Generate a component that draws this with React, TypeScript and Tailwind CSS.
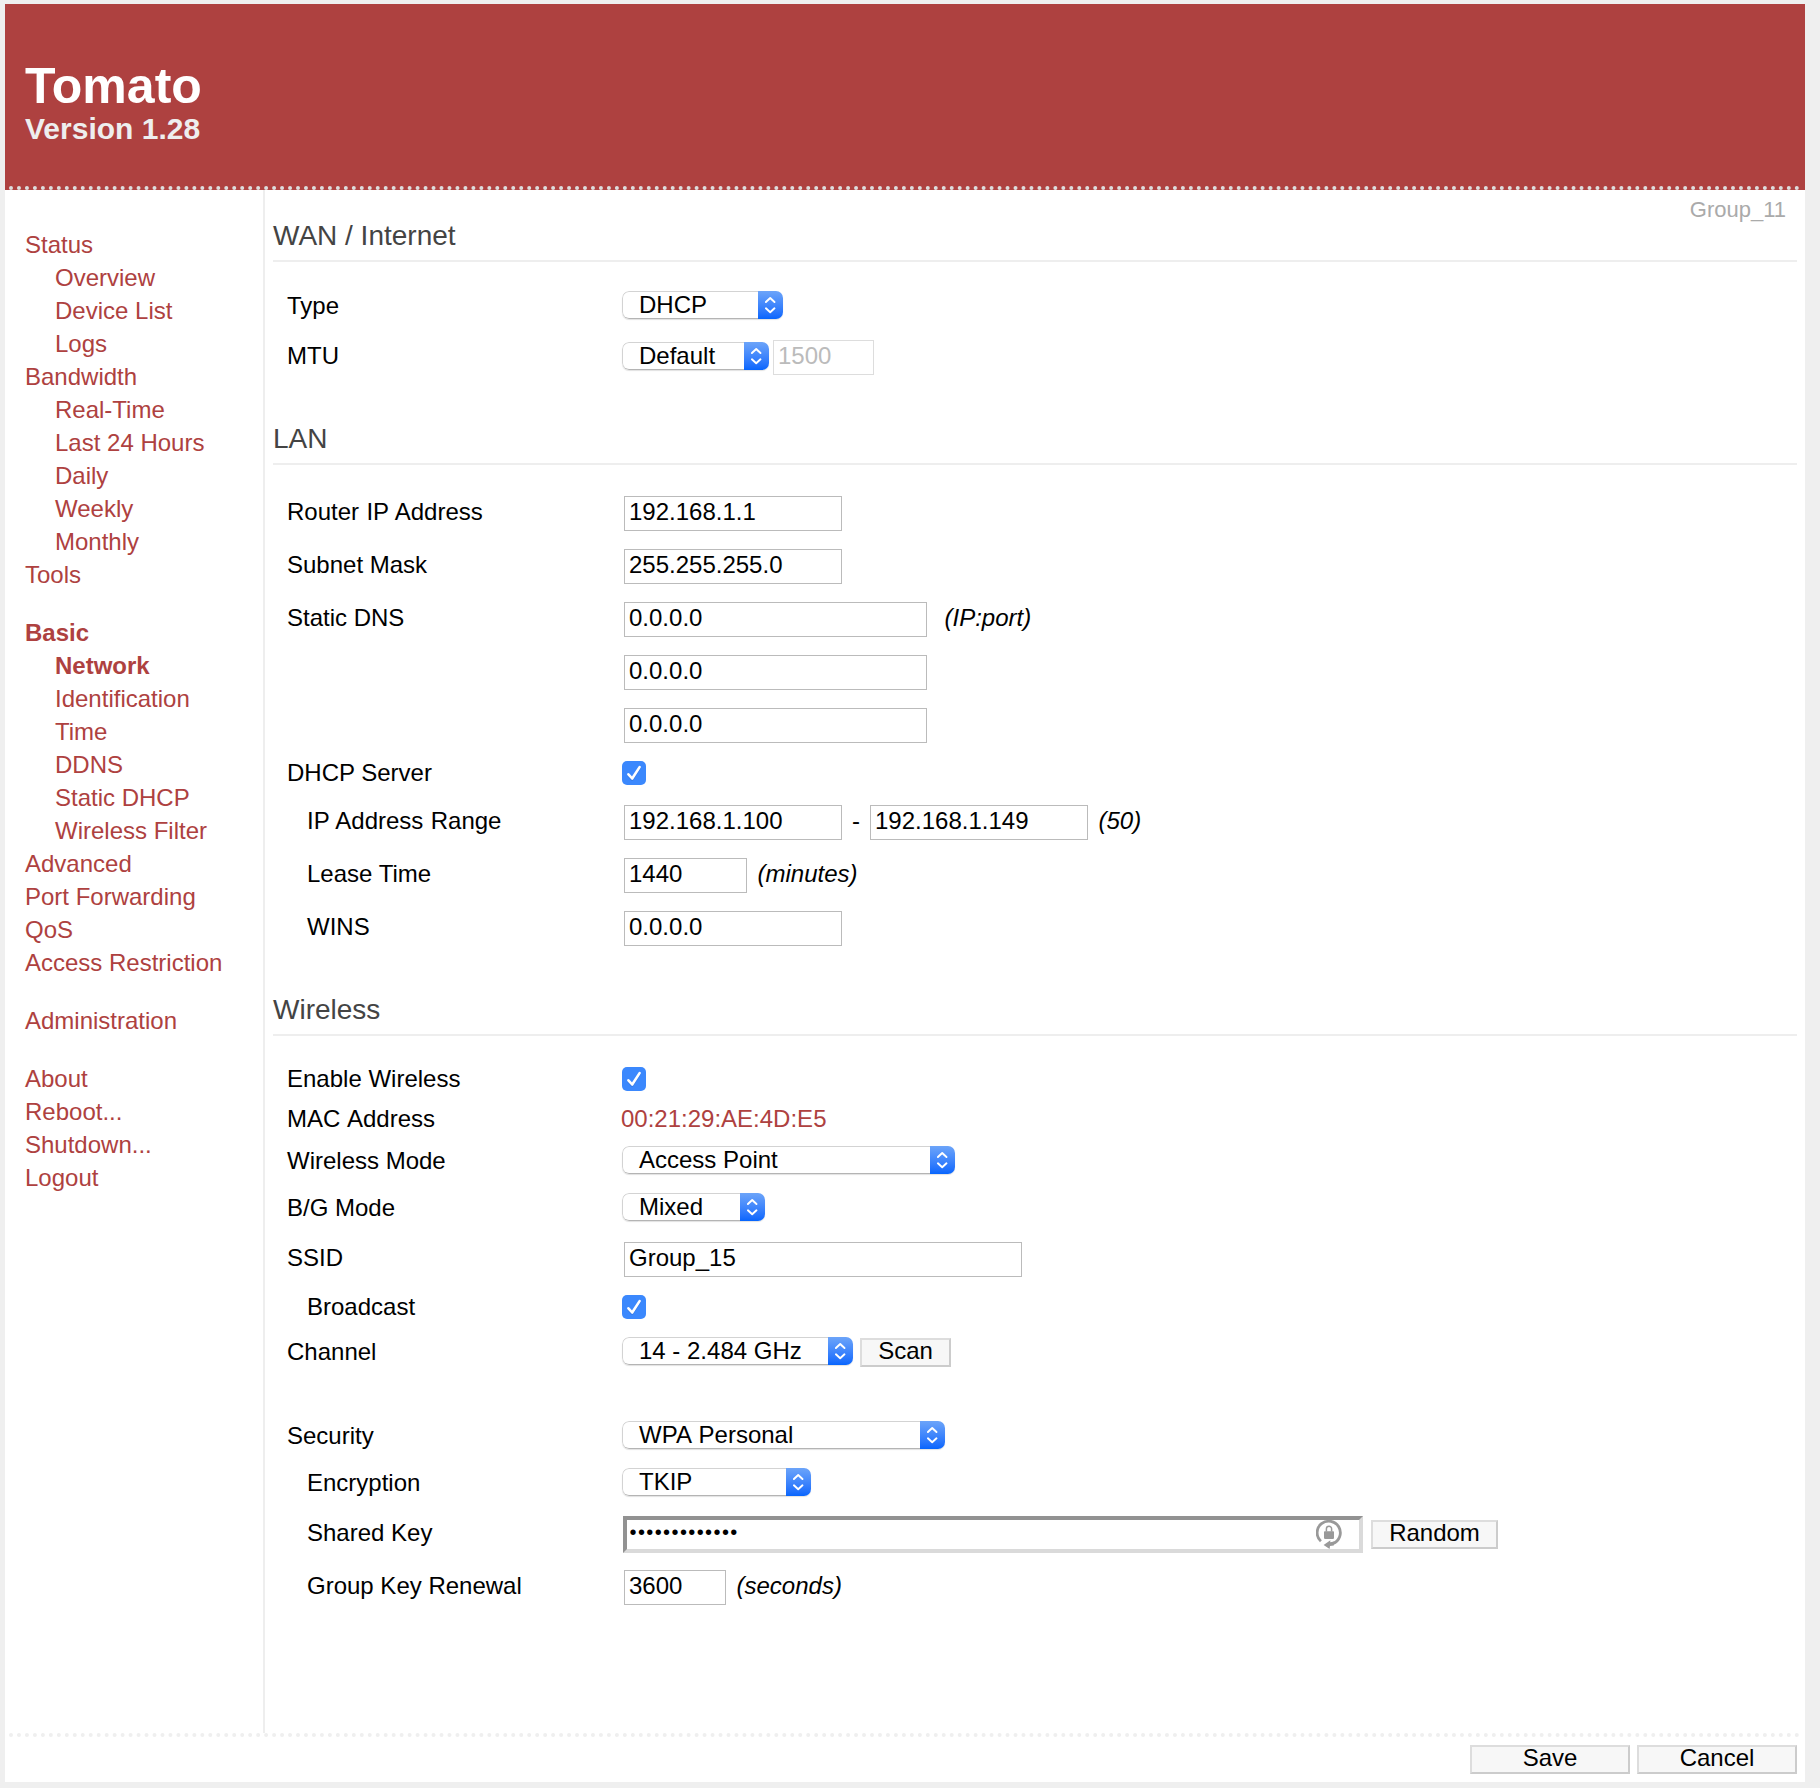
import type { ReactNode } from 'react';

type NavItem = { label: string; sub?: boolean; active?: boolean; gap?: boolean };

const NAV: NavItem[] = [
  { label: 'Status' },
  { label: 'Overview', sub: true },
  { label: 'Device List', sub: true },
  { label: 'Logs', sub: true },
  { label: 'Bandwidth' },
  { label: 'Real-Time', sub: true },
  { label: 'Last 24 Hours', sub: true },
  { label: 'Daily', sub: true },
  { label: 'Weekly', sub: true },
  { label: 'Monthly', sub: true },
  { label: 'Tools' },
  { label: 'Basic', active: true, gap: true },
  { label: 'Network', sub: true, active: true },
  { label: 'Identification', sub: true },
  { label: 'Time', sub: true },
  { label: 'DDNS', sub: true },
  { label: 'Static DHCP', sub: true },
  { label: 'Wireless Filter', sub: true },
  { label: 'Advanced' },
  { label: 'Port Forwarding' },
  { label: 'QoS' },
  { label: 'Access Restriction' },
  { label: 'Administration', gap: true },
  { label: 'About', gap: true },
  { label: 'Reboot...' },
  { label: 'Shutdown...' },
  { label: 'Logout' },
];

function Heading({ children, className = '' }: { children: ReactNode; className?: string }) {
  return (
    <h2 className={`h-10 border-b-2 border-[#eeeeee] text-[28px] leading-[27px] text-[#444444] ${className}`}>
      {children}
    </h2>
  );
}

function Row({
  label,
  height,
  shift,
  indent,
  children,
}: {
  label?: string;
  height: string;
  shift: string;
  indent?: boolean;
  children: ReactNode;
}) {
  return (
    <div className={`flex items-start ${height}`}>
      <div className={`w-[349px] shrink-0 leading-[27px] ${indent ? 'pl-[34px]' : 'pl-[14px]'} ${shift}`}>{label}</div>
      {children}
    </div>
  );
}

function TextField({ value, width, disabled, className = '' }: { value: string; width: string; disabled?: boolean; className?: string }) {
  return (
    <input
      readOnly
      value={value}
      className={`h-[35px] shrink-0 border bg-white pb-1 pl-1 leading-[27px] outline-none ${
        disabled ? 'border-[#dddddd] text-[#bbbbbb]' : 'border-[#bbbbbb] text-black'
      } ${width} ${className}`}
    />
  );
}

function Select({ value, width, className = '' }: { value: string; width: string; className?: string }) {
  return (
    <button
      className={`flex h-7 shrink-0 overflow-hidden rounded-[7px] bg-white shadow-[0_1px_1px_rgba(0,0,0,0.12)] ${width} ${className}`}
    >
      <span className="h-7 flex-1 rounded-l-[7px] border border-r-0 border-[#d3d3d3] border-b-[#b4b4b4] pl-4 text-left whitespace-nowrap">
        <span className="-mt-px block leading-[27px]">{value}</span>
      </span>
      <span className="h-7 w-[25px] shrink-0 bg-gradient-to-b from-[#6ca4f9] to-[#0565fd]">
        <svg viewBox="0 0 25 28" className="h-7 w-[25px]" fill="none" stroke="white" strokeWidth="1.9" strokeLinecap="round" strokeLinejoin="round">
          <path d="M7.9 11 L12.2 7 L16.5 11 M7.9 17.3 L12.2 21.3 L16.5 17.3" />
        </svg>
      </span>
    </button>
  );
}

function Checkbox() {
  return (
    <span role="checkbox" aria-checked="true" className="h-6 w-6 shrink-0 rounded-[5px] bg-[#3b88fd]">
      <svg viewBox="0 0 24 24" className="h-6 w-6" fill="none" strokeWidth="2.6" strokeLinecap="round" strokeLinejoin="round">
        <path d="M6.4 14.3 L10.2 18.6 L17.6 7.1" stroke="#2f70d8" strokeOpacity="0.6" />
        <path d="M6.4 13.3 L10.2 17.5 L17.6 6.1" stroke="white" />
      </svg>
    </span>
  );
}

function Button({ children, width, className = '' }: { children: ReactNode; width: string; className?: string }) {
  return (
    <button
      className={`h-[29px] shrink-0 border-2 border-t-[#dddddd] border-r-[#cccccc] border-b-[#cccccc] border-l-[#dddddd] bg-[#f7f7f7] ${width} ${className}`}
    >
      <span className="-mt-1 block leading-[27px]">{children}</span>
    </button>
  );
}

function KeyIcon() {
  return (
    <svg viewBox="0 0 26 30" className="absolute top-[3px] right-[21px] h-[30px] w-[26px]">
      <path d="M4.9 22.3 A11.6 11.6 0 1 1 16.8 24.6" fill="none" stroke="#999999" strokeWidth="2.8" />
      <path d="M7.6 25.9 L14.4 21.2 L14.2 23.2 L18.2 22.4 L17.8 26.4 L14 27 L13.6 30 Z" fill="#999999" />
      <rect x="8" y="12.3" width="10" height="7.6" rx="0.8" fill="#999999" />
      <path d="M10.4 12.5 V9.8 A2.6 2.6 0 0 1 15.6 9.8 V12.5" fill="none" stroke="#999999" strokeWidth="1.5" />
    </svg>
  );
}

export default function App() {
  return (
    <div className="h-[1788px] w-[1820px] overflow-hidden bg-[#efefef] pt-1 pl-[5px] font-['Liberation_Sans',Arial,sans-serif] text-[24px] text-black">
      <div className="flex h-[1778px] w-[1800px] flex-col bg-white">
        <header className="h-[186px] shrink-0 bg-[#ae4140] px-1">
          <div className="h-[186px] border-b-4 border-dotted border-[#dddddd] pt-[54px] pl-4 font-bold">
            <h1 className="text-[50px] leading-[56px] text-white">Tomato</h1>
            <p className="-mt-[2px] text-[30px] leading-[33px] text-[#eeeeee]">Version 1.28</p>
          </div>
        </header>

        <div className="flex h-[1543px] shrink-0">
          <nav className="w-[260px] shrink-0 border-r-2 border-[#eeeeee] pt-[38px] pl-5 text-[#ae4140]">
            {NAV.map((item) => (
              <a
                key={item.label}
                className={`block leading-[33px] ${item.sub ? 'pl-[30px]' : ''} ${item.active ? 'font-bold' : ''} ${item.gap ? 'mt-[25px]' : ''}`}
              >
                {item.label}
              </a>
            ))}
          </nav>

          <main className="w-[1540px] shrink-0 pr-2 pl-2">
            <div className="h-8 pt-[6px] pr-[11px] text-right text-[22px] leading-[27px] text-[#aaaaaa]">Group_11</div>

            <Heading>WAN / Internet</Heading>
            <div className="pt-[29px]">
              <Row label="Type" height="h-[49px]" shift="mt-px">
                <Select value="DHCP" width="w-[161px]" />
              </Row>
              <Row label="MTU" height="h-[35px]" shift="mt-[2px]">
                <Select value="Default" width="w-[147px]" className="mt-[2px] mr-1" />
                <TextField value="1500" width="w-[101px]" disabled />
              </Row>
            </div>

            <Heading className="mt-[50px]">LAN</Heading>
            <div className="pt-[31px]">
              <Row label="Router IP Address" height="h-[53px]" shift="mt-[2px] [word-spacing:0.7px]">
                <TextField value="192.168.1.1" width="w-[218px]" className="ml-[2px]" />
              </Row>
              <Row label="Subnet Mask" height="h-[53px]" shift="mt-[2px]">
                <TextField value="255.255.255.0" width="w-[218px]" className="ml-[2px]" />
              </Row>
              <Row label="Static DNS" height="h-[53px]" shift="mt-[2px]">
                <TextField value="0.0.0.0" width="w-[303px]" className="ml-[2px]" />
                <i className="mt-[2px] ml-[17.5px] leading-[27px]">(IP:port)</i>
              </Row>
              <Row height="h-[53px]" shift="mt-[2px]">
                <TextField value="0.0.0.0" width="w-[303px]" className="ml-[2px]" />
              </Row>
              <Row height="h-[53px]" shift="mt-[2px]">
                <TextField value="0.0.0.0" width="w-[303px]" className="ml-[2px]" />
              </Row>
              <Row label="DHCP Server" height="h-[44px]" shift="-mt-[2px]">
                <Checkbox />
              </Row>
              <Row label="IP Address Range" height="h-[53px]" shift="mt-[2px] [word-spacing:0.7px]" indent>
                <TextField value="192.168.1.100" width="w-[218px]" className="ml-[2px]" />
                <span className="mt-[2px] w-7 text-center leading-[27px]">-</span>
                <TextField value="192.168.1.149" width="w-[218px]" />
                <i className="mt-[2px] ml-[10.5px] leading-[27px]">(50)</i>
              </Row>
              <Row label="Lease Time" height="h-[53px]" shift="mt-[2px]" indent>
                <TextField value="1440" width="w-[123px]" className="ml-[2px]" />
                <i className="mt-[2px] ml-[10.5px] leading-[27px]">(minutes)</i>
              </Row>
              <Row label="WINS" height="h-[35px]" shift="mt-[2px]" indent>
                <TextField value="0.0.0.0" width="w-[218px]" className="ml-[2px]" />
              </Row>
            </div>

            <Heading className="mt-[50px]">Wireless</Heading>
            <div className="pt-[31px]">
              <Row label="Enable Wireless" height="h-[38px]" shift="-mt-[2px]">
                <Checkbox />
              </Row>
              <Row label="MAC Address" height="h-[41px]" shift="mt-0 [word-spacing:1.3px]">
                <span className="-ml-px leading-[27px] text-[#ae4140]">00:21:29:AE:4D:E5</span>
              </Row>
              <Row label="Wireless Mode" height="h-[47px]" shift="mt-px">
                <Select value="Access Point" width="w-[333px]" />
              </Row>
              <Row label="B/G Mode" height="h-[49px]" shift="mt-px">
                <Select value="Mixed" width="w-[143px]" />
              </Row>
              <Row label="SSID" height="h-[53px]" shift="mt-[2px]">
                <TextField value="Group_15" width="w-[398px]" className="ml-[2px]" />
              </Row>
              <Row label="Broadcast" height="h-[42px]" shift="-mt-[2px]" indent>
                <Checkbox />
              </Row>
              <Row label="Channel" height="h-[84px]" shift="mt-px">
                <Select value="14 - 2.484 GHz" width="w-[231px]" />
                <Button width="w-[91px]" className="mt-px ml-[7px]">Scan</Button>
              </Row>
              <Row label="Security" height="h-[47px]" shift="mt-px">
                <Select value="WPA Personal" width="w-[323px]" className="[word-spacing:1.3px]" />
              </Row>
              <Row label="Encryption" height="h-[48px]" shift="mt-px" indent>
                <Select value="TKIP" width="w-[189px]" />
              </Row>
              <Row label="Shared Key" height="h-[54px]" shift="mt-[3px]" indent>
                <div className="relative ml-px h-[37px] w-[740px] shrink-0">
                  <input
                    type="password"
                    readOnly
                    value="tomatorouter1"
                    className="block h-[37px] w-[740px] border-4 border-t-[#929292] border-r-[#dadada] border-b-[#dadada] border-l-[#929292] bg-white pb-1 pl-[2.5px] text-[20px] leading-[27px] tracking-[1.4px] outline-none"
                  />
                  <KeyIcon />
                </div>
                <Button width="w-[127px]" className="mt-1 ml-2">Random</Button>
              </Row>
              <Row label="Group Key Renewal" height="h-[35px]" shift="mt-[2px]" indent>
                <TextField value="3600" width="w-[102px]" className="ml-[2px]" />
                <i className="mt-[2px] ml-[10.5px] leading-[27px]">(seconds)</i>
              </Row>
            </div>
          </main>
        </div>

        <footer className="mx-1 flex justify-end gap-[7px] border-t-4 border-dotted border-[#efefef] pt-2 pr-1">
          <Button width="w-[160px]">Save</Button>
          <Button width="w-[160px]">Cancel</Button>
        </footer>
      </div>
    </div>
  );
}
